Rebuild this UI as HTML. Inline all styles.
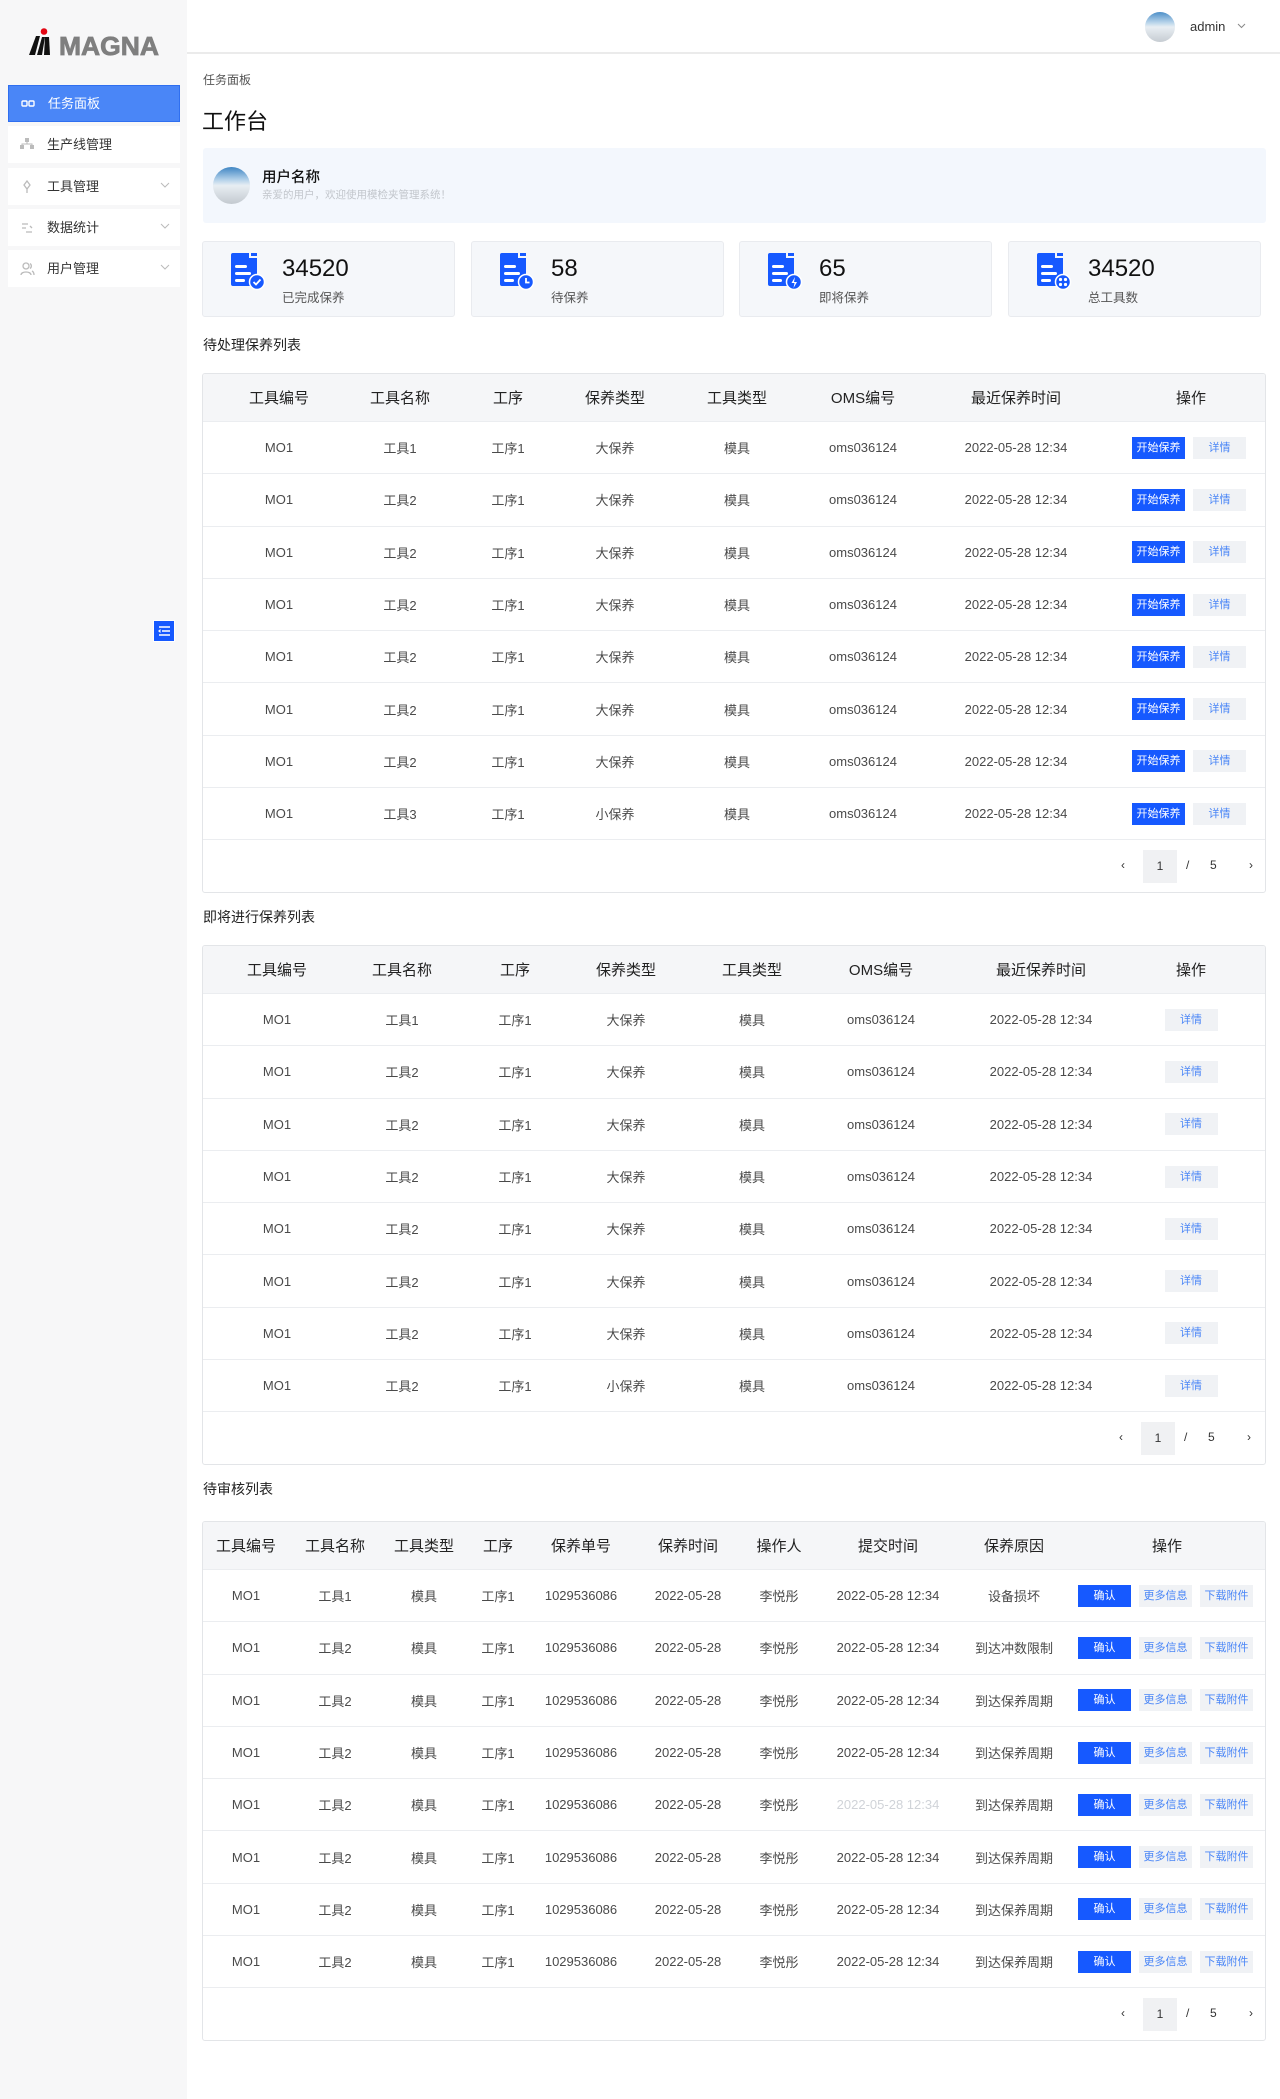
<!DOCTYPE html>
<html><head><meta charset="utf-8">
<style>
*{margin:0;padding:0;box-sizing:border-box}
body{width:1280px;height:2099px;overflow:hidden;background:#fff;font-family:"Liberation Sans","Noto Sans CJK SC",sans-serif;color:#333;position:relative}
.side{position:absolute;left:0;top:0;width:187px;height:2099px;background:#f7f7f8}
.logo{position:absolute;left:29px;top:28px}
.mi{position:absolute;left:8px;width:172px;height:37px;background:#fff;font-size:13px;color:#333;line-height:37px;padding-left:39px}
.mi svg{position:absolute;left:12px;top:12px}
.mi .chev{position:absolute;left:152px;top:13px}
.mi.act{background:#4a86f7;color:#fff;border:1px solid #2f6ff0;line-height:35px}
.hdr{position:absolute;left:187px;top:0;right:0;height:54px;border-bottom:2px solid #ebebeb}
.abs{position:absolute}
.card{position:absolute;top:241px;width:253px;height:76px;background:#f5f7fa;border:1px solid #e9ebef;border-radius:3px}
.card .num{position:absolute;left:79px;top:13px;font-size:24px;color:#111}
.card .lbl{position:absolute;left:79px;top:45px;font-size:12.5px;color:#555}
.card svg{position:absolute;left:28px;top:11px}
.sec{position:absolute;left:203px;font-size:14px;color:#222}
.tbl{position:absolute;left:202px;width:1064px;border:1px solid #e3e5e8;border-radius:3px;overflow:hidden}
.th{display:flex;height:47px;align-items:center;background:#f5f6f8;font-size:15px;color:#222}
.tr{display:flex;height:52.3px;align-items:center;border-top:1px solid #ebedf0;font-size:13px;color:#4a4a4a}
.th div,.tr div{text-align:center;flex:none}
.pg{height:53px;border-top:1px solid #ebedf0;position:relative;font-size:12px;color:#333}
.pg .b{position:absolute;top:10px;width:34px;height:33px;background:#f0f1f3;text-align:center;line-height:33px}
.pg span{position:absolute;top:18px}
.bb{display:inline-block;width:53px;height:22px;line-height:22px;font-size:11px;background:#1659ff;color:#fff;text-align:center;vertical-align:middle}
.bl{display:inline-block;width:53px;height:22px;line-height:22px;font-size:11px;background:#f0f2f5;color:#4a86f7;text-align:center;vertical-align:middle}
.ops{text-align:left!important;padding-left:11px;display:flex;gap:8px;align-items:center}
.ops3{text-align:left!important;padding-left:11px;display:flex;gap:8px;align-items:center}
</style></head><body>
<div class="side">
 <div class="logo">
  <svg width="132" height="28" viewBox="0 0 132 28">
   <circle cx="15" cy="3.5" r="3.3" fill="#e30613"/>
   <polygon points="0,27 7,8 11,8 6,27" fill="#111"/>
   <polygon points="8,27 13,9 16,9 13,27" fill="#111"/>
   <polygon points="15,27 16,9 20,9 21,27" fill="#111"/>
   <text x="30" y="27" style="font-family:'Liberation Sans';font-weight:700;font-size:26px" fill="#7f7f7f" stroke="#7f7f7f" stroke-width="0.8" textLength="100" lengthAdjust="spacingAndGlyphs">MAGNA</text>
  </svg>
 </div>
 <div class="mi act" style="top:85px"><svg width="14" height="12"><rect x="1" y="3" width="5" height="5" rx="1" fill="none" stroke="#fff" stroke-width="1.4"/><rect x="8" y="3" width="5" height="5" rx="1" fill="none" stroke="#fff" stroke-width="1.4"/></svg>任务面板</div>
 <div class="mi" style="top:126px"><svg width="14" height="12"><rect x="5" y="0" width="4" height="4" fill="#bbb"/><rect x="0" y="7" width="4" height="4" fill="#bbb"/><rect x="10" y="7" width="4" height="4" fill="#bbb"/><path d="M7 4v2M2 7V6h10v1" stroke="#bbb" fill="none"/></svg>生产线管理</div>
 <div class="mi" style="top:168px"><svg width="14" height="14"><path d="M7 1l3 4-3 4-3-4z M7 9v4" stroke="#bbb" fill="none" stroke-width="1.3"/></svg>工具管理<svg class="chev" width="10" height="8"><path d="M1 2l4 4 4-4" stroke="#bbb" fill="none"/></svg></div>
 <div class="mi" style="top:209px"><svg width="14" height="14"><path d="M2 3h6M2 7h4M6 11h6M10 5l2 2" stroke="#bbb" fill="none" stroke-width="1.3"/></svg>数据统计<svg class="chev" width="10" height="8"><path d="M1 2l4 4 4-4" stroke="#bbb" fill="none"/></svg></div>
 <div class="mi" style="top:250px"><svg width="15" height="14"><circle cx="6" cy="4" r="3" fill="none" stroke="#bbb" stroke-width="1.3"/><path d="M1 13c0-4 10-4 10 0M10 1.5a3 3 0 010 5M12 9c2 1 2 3 2 4" stroke="#bbb" fill="none" stroke-width="1.3"/></svg>用户管理<svg class="chev" width="10" height="8"><path d="M1 2l4 4 4-4" stroke="#bbb" fill="none"/></svg></div>
 <div class="abs" style="left:153px;top:620px;width:22px;height:22px;background:#1659ff;border:1px solid #fff"><svg width="20" height="20"><path d="M5 6h11M8 10h8M5 14h11" stroke="#fff" stroke-width="1.6"/><path d="M4 10l2.5-2v4z" fill="#fff"/></svg></div>
</div>

<div class="hdr">
 <svg class="abs" style="left:958px;top:12px" width="30" height="30"><defs><linearGradient id="av" x1="0" y1="0" x2="0" y2="1"><stop offset="0" stop-color="#4d8fc8"/><stop offset=".35" stop-color="#b8d4ea"/><stop offset=".5" stop-color="#e8eef3"/><stop offset="1" stop-color="#c6ccd2"/></linearGradient></defs><circle cx="15" cy="15" r="15" fill="url(#av)"/></svg>
 <div class="abs" style="left:1003px;top:19px;font-size:13px;color:#333">admin</div>
 <svg class="abs" style="left:1050px;top:23px" width="9" height="6"><path d="M1 1l3.5 3.5L8 1" stroke="#888" fill="none"/></svg>
</div>

<div class="abs" style="left:203px;top:71px;font-size:12px;color:#555">任务面板</div>
<div class="abs" style="left:202px;top:104px;font-size:22px;color:#111">工作台</div>

<div class="abs" style="left:203px;top:148px;width:1063px;height:75px;background:#f3f7fd;border-radius:3px">
 <svg class="abs" style="left:10px;top:19px" width="37" height="37"><defs><linearGradient id="av2" x1="0" y1="0" x2="0" y2="1"><stop offset="0" stop-color="#3f86c4"/><stop offset=".35" stop-color="#b5d2ea"/><stop offset=".5" stop-color="#e8eef3"/><stop offset="1" stop-color="#c3c9cf"/></linearGradient></defs><circle cx="18.5" cy="18.5" r="18.5" fill="url(#av2)"/></svg>
 <div class="abs" style="left:59px;top:18px;font-size:14.5px;color:#111;font-weight:500">用户名称</div>
 <div class="abs" style="left:59px;top:39px;font-size:10.5px;color:#c2c6cc">亲爱的用户，欢迎使用模检夹管理系统！</div>
</div>

<svg width="0" height="0" style="position:absolute"><defs>
<g id="doc"><path d="M0 2a2 2 0 012-2h16v5h8v26a2 2 0 01-2 2H2a2 2 0 01-2-2z" fill="#1659ff"/><path d="M20 0l6 0v3h-6z" fill="#1659ff"/><rect x="4" y="12" width="12" height="3" rx="1.5" fill="#fff"/><rect x="4" y="19" width="16" height="3" rx="1.5" fill="#fff"/><rect x="4" y="26" width="10" height="3" rx="1.5" fill="#fff"/><circle cx="26" cy="29" r="7.5" fill="#1659ff" stroke="#fff" stroke-width="1.5"/></g>
</defs></svg>
<div class="card" style="left:202px"><svg width="36" height="40"><use href="#doc"/><path d="M22.5 29l2.5 2.5 4.5-5" stroke="#fff" stroke-width="1.8" fill="none"/></svg><div class="num">34520</div><div class="lbl">已完成保养</div></div>
<div class="card" style="left:471px"><svg width="36" height="40"><use href="#doc"/><path d="M26 25v4.5h3.5" stroke="#fff" stroke-width="1.8" fill="none"/></svg><div class="num">58</div><div class="lbl">待保养</div></div>
<div class="card" style="left:739px"><svg width="36" height="40"><use href="#doc"/><path d="M27 24l-3.5 6h3l-1 5 3.5-6h-3z" fill="#fff"/></svg><div class="num">65</div><div class="lbl">即将保养</div></div>
<div class="card" style="left:1008px"><svg width="36" height="40"><use href="#doc"/><circle cx="23.5" cy="26.5" r="1.6" fill="#fff"/><circle cx="28.5" cy="26.5" r="1.6" fill="#fff"/><circle cx="23.5" cy="31.5" r="1.6" fill="#fff"/><circle cx="28.5" cy="31.5" r="1.6" fill="#fff"/></svg><div class="num">34520</div><div class="lbl">总工具数</div></div>

<div class="sec" style="top:335px">待处理保养列表</div>
<div class="tbl" style="top:373px">
 <div class="th"><div style="width:152px">工具编号</div><div style="width:90px">工具名称</div><div style="width:126px">工序</div><div style="width:88px">保养类型</div><div style="width:156px">工具类型</div><div style="width:96px">OMS编号</div><div style="width:210px">最近保养时间</div><div style="width:140px">操作</div></div>
 <div class="tr"><div style="width:152px">MO1</div><div style="width:90px">工具1</div><div style="width:126px">工序1</div><div style="width:88px">大保养</div><div style="width:156px">模具</div><div style="width:96px">oms036124</div><div style="width:210px">2022-05-28 12:34</div><div class="ops" style="width:140px"><span class="bb">开始保养</span><span class="bl">详情</span></div></div>
 <div class="tr"><div style="width:152px">MO1</div><div style="width:90px">工具2</div><div style="width:126px">工序1</div><div style="width:88px">大保养</div><div style="width:156px">模具</div><div style="width:96px">oms036124</div><div style="width:210px">2022-05-28 12:34</div><div class="ops" style="width:140px"><span class="bb">开始保养</span><span class="bl">详情</span></div></div>
 <div class="tr"><div style="width:152px">MO1</div><div style="width:90px">工具2</div><div style="width:126px">工序1</div><div style="width:88px">大保养</div><div style="width:156px">模具</div><div style="width:96px">oms036124</div><div style="width:210px">2022-05-28 12:34</div><div class="ops" style="width:140px"><span class="bb">开始保养</span><span class="bl">详情</span></div></div>
 <div class="tr"><div style="width:152px">MO1</div><div style="width:90px">工具2</div><div style="width:126px">工序1</div><div style="width:88px">大保养</div><div style="width:156px">模具</div><div style="width:96px">oms036124</div><div style="width:210px">2022-05-28 12:34</div><div class="ops" style="width:140px"><span class="bb">开始保养</span><span class="bl">详情</span></div></div>
 <div class="tr"><div style="width:152px">MO1</div><div style="width:90px">工具2</div><div style="width:126px">工序1</div><div style="width:88px">大保养</div><div style="width:156px">模具</div><div style="width:96px">oms036124</div><div style="width:210px">2022-05-28 12:34</div><div class="ops" style="width:140px"><span class="bb">开始保养</span><span class="bl">详情</span></div></div>
 <div class="tr"><div style="width:152px">MO1</div><div style="width:90px">工具2</div><div style="width:126px">工序1</div><div style="width:88px">大保养</div><div style="width:156px">模具</div><div style="width:96px">oms036124</div><div style="width:210px">2022-05-28 12:34</div><div class="ops" style="width:140px"><span class="bb">开始保养</span><span class="bl">详情</span></div></div>
 <div class="tr"><div style="width:152px">MO1</div><div style="width:90px">工具2</div><div style="width:126px">工序1</div><div style="width:88px">大保养</div><div style="width:156px">模具</div><div style="width:96px">oms036124</div><div style="width:210px">2022-05-28 12:34</div><div class="ops" style="width:140px"><span class="bb">开始保养</span><span class="bl">详情</span></div></div>
 <div class="tr"><div style="width:152px">MO1</div><div style="width:90px">工具3</div><div style="width:126px">工序1</div><div style="width:88px">小保养</div><div style="width:156px">模具</div><div style="width:96px">oms036124</div><div style="width:210px">2022-05-28 12:34</div><div class="ops" style="width:140px"><span class="bb">开始保养</span><span class="bl">详情</span></div></div>
 <div class="pg"><span style="left:918px">‹</span><div class="b" style="left:940px">1</div><span style="left:983px">/</span><span style="left:1007px">5</span><span style="left:1046px">›</span></div>
</div>

<div class="sec" style="top:907px">即将进行保养列表</div>
<div class="tbl" style="top:945px">
 <div class="th"><div style="width:148px">工具编号</div><div style="width:102px">工具名称</div><div style="width:124px">工序</div><div style="width:98px">保养类型</div><div style="width:154px">工具类型</div><div style="width:104px">OMS编号</div><div style="width:216px">最近保养时间</div><div style="width:84px">操作</div></div>
 <div class="tr"><div style="width:148px">MO1</div><div style="width:102px">工具1</div><div style="width:124px">工序1</div><div style="width:98px">大保养</div><div style="width:154px">模具</div><div style="width:104px">oms036124</div><div style="width:216px">2022-05-28 12:34</div><div style="width:84px"><span class="bl">详情</span></div></div>
 <div class="tr"><div style="width:148px">MO1</div><div style="width:102px">工具2</div><div style="width:124px">工序1</div><div style="width:98px">大保养</div><div style="width:154px">模具</div><div style="width:104px">oms036124</div><div style="width:216px">2022-05-28 12:34</div><div style="width:84px"><span class="bl">详情</span></div></div>
 <div class="tr"><div style="width:148px">MO1</div><div style="width:102px">工具2</div><div style="width:124px">工序1</div><div style="width:98px">大保养</div><div style="width:154px">模具</div><div style="width:104px">oms036124</div><div style="width:216px">2022-05-28 12:34</div><div style="width:84px"><span class="bl">详情</span></div></div>
 <div class="tr"><div style="width:148px">MO1</div><div style="width:102px">工具2</div><div style="width:124px">工序1</div><div style="width:98px">大保养</div><div style="width:154px">模具</div><div style="width:104px">oms036124</div><div style="width:216px">2022-05-28 12:34</div><div style="width:84px"><span class="bl">详情</span></div></div>
 <div class="tr"><div style="width:148px">MO1</div><div style="width:102px">工具2</div><div style="width:124px">工序1</div><div style="width:98px">大保养</div><div style="width:154px">模具</div><div style="width:104px">oms036124</div><div style="width:216px">2022-05-28 12:34</div><div style="width:84px"><span class="bl">详情</span></div></div>
 <div class="tr"><div style="width:148px">MO1</div><div style="width:102px">工具2</div><div style="width:124px">工序1</div><div style="width:98px">大保养</div><div style="width:154px">模具</div><div style="width:104px">oms036124</div><div style="width:216px">2022-05-28 12:34</div><div style="width:84px"><span class="bl">详情</span></div></div>
 <div class="tr"><div style="width:148px">MO1</div><div style="width:102px">工具2</div><div style="width:124px">工序1</div><div style="width:98px">大保养</div><div style="width:154px">模具</div><div style="width:104px">oms036124</div><div style="width:216px">2022-05-28 12:34</div><div style="width:84px"><span class="bl">详情</span></div></div>
 <div class="tr"><div style="width:148px">MO1</div><div style="width:102px">工具2</div><div style="width:124px">工序1</div><div style="width:98px">小保养</div><div style="width:154px">模具</div><div style="width:104px">oms036124</div><div style="width:216px">2022-05-28 12:34</div><div style="width:84px"><span class="bl">详情</span></div></div>
 <div class="pg"><span style="left:916px">‹</span><div class="b" style="left:938px">1</div><span style="left:981px">/</span><span style="left:1005px">5</span><span style="left:1044px">›</span></div>
</div>

<div class="sec" style="top:1479px">待审核列表</div>
<div class="tbl" style="top:1521px">
 <div class="th"><div style="width:86px">工具编号</div><div style="width:92px">工具名称</div><div style="width:86px">工具类型</div><div style="width:62px">工序</div><div style="width:104px">保养单号</div><div style="width:110px">保养时间</div><div style="width:72px">操作人</div><div style="width:146px">提交时间</div><div style="width:106px">保养原因</div><div style="width:200px">操作</div></div>
 <div class="tr"><div style="width:86px">MO1</div><div style="width:92px">工具1</div><div style="width:86px">模具</div><div style="width:62px">工序1</div><div style="width:104px">1029536086</div><div style="width:110px">2022-05-28</div><div style="width:72px">李悦彤</div><div style="width:146px">2022-05-28 12:34</div><div style="width:106px">设备损坏</div><div class="ops3" style="width:200px"><span class="bb">确认</span><span class="bl">更多信息</span><span class="bl">下载附件</span></div></div>
 <div class="tr"><div style="width:86px">MO1</div><div style="width:92px">工具2</div><div style="width:86px">模具</div><div style="width:62px">工序1</div><div style="width:104px">1029536086</div><div style="width:110px">2022-05-28</div><div style="width:72px">李悦彤</div><div style="width:146px">2022-05-28 12:34</div><div style="width:106px">到达冲数限制</div><div class="ops3" style="width:200px"><span class="bb">确认</span><span class="bl">更多信息</span><span class="bl">下载附件</span></div></div>
 <div class="tr"><div style="width:86px">MO1</div><div style="width:92px">工具2</div><div style="width:86px">模具</div><div style="width:62px">工序1</div><div style="width:104px">1029536086</div><div style="width:110px">2022-05-28</div><div style="width:72px">李悦彤</div><div style="width:146px">2022-05-28 12:34</div><div style="width:106px">到达保养周期</div><div class="ops3" style="width:200px"><span class="bb">确认</span><span class="bl">更多信息</span><span class="bl">下载附件</span></div></div>
 <div class="tr"><div style="width:86px">MO1</div><div style="width:92px">工具2</div><div style="width:86px">模具</div><div style="width:62px">工序1</div><div style="width:104px">1029536086</div><div style="width:110px">2022-05-28</div><div style="width:72px">李悦彤</div><div style="width:146px">2022-05-28 12:34</div><div style="width:106px">到达保养周期</div><div class="ops3" style="width:200px"><span class="bb">确认</span><span class="bl">更多信息</span><span class="bl">下载附件</span></div></div>
 <div class="tr"><div style="width:86px">MO1</div><div style="width:92px">工具2</div><div style="width:86px">模具</div><div style="width:62px">工序1</div><div style="width:104px">1029536086</div><div style="width:110px">2022-05-28</div><div style="width:72px">李悦彤</div><div style="width:146px;color:#d0d3d8">2022-05-28 12:34</div><div style="width:106px">到达保养周期</div><div class="ops3" style="width:200px"><span class="bb">确认</span><span class="bl">更多信息</span><span class="bl">下载附件</span></div></div>
 <div class="tr"><div style="width:86px">MO1</div><div style="width:92px">工具2</div><div style="width:86px">模具</div><div style="width:62px">工序1</div><div style="width:104px">1029536086</div><div style="width:110px">2022-05-28</div><div style="width:72px">李悦彤</div><div style="width:146px">2022-05-28 12:34</div><div style="width:106px">到达保养周期</div><div class="ops3" style="width:200px"><span class="bb">确认</span><span class="bl">更多信息</span><span class="bl">下载附件</span></div></div>
 <div class="tr"><div style="width:86px">MO1</div><div style="width:92px">工具2</div><div style="width:86px">模具</div><div style="width:62px">工序1</div><div style="width:104px">1029536086</div><div style="width:110px">2022-05-28</div><div style="width:72px">李悦彤</div><div style="width:146px">2022-05-28 12:34</div><div style="width:106px">到达保养周期</div><div class="ops3" style="width:200px"><span class="bb">确认</span><span class="bl">更多信息</span><span class="bl">下载附件</span></div></div>
 <div class="tr"><div style="width:86px">MO1</div><div style="width:92px">工具2</div><div style="width:86px">模具</div><div style="width:62px">工序1</div><div style="width:104px">1029536086</div><div style="width:110px">2022-05-28</div><div style="width:72px">李悦彤</div><div style="width:146px">2022-05-28 12:34</div><div style="width:106px">到达保养周期</div><div class="ops3" style="width:200px"><span class="bb">确认</span><span class="bl">更多信息</span><span class="bl">下载附件</span></div></div>
 <div class="pg"><span style="left:918px">‹</span><div class="b" style="left:940px">1</div><span style="left:983px">/</span><span style="left:1007px">5</span><span style="left:1046px">›</span></div>
</div>
</body></html>
